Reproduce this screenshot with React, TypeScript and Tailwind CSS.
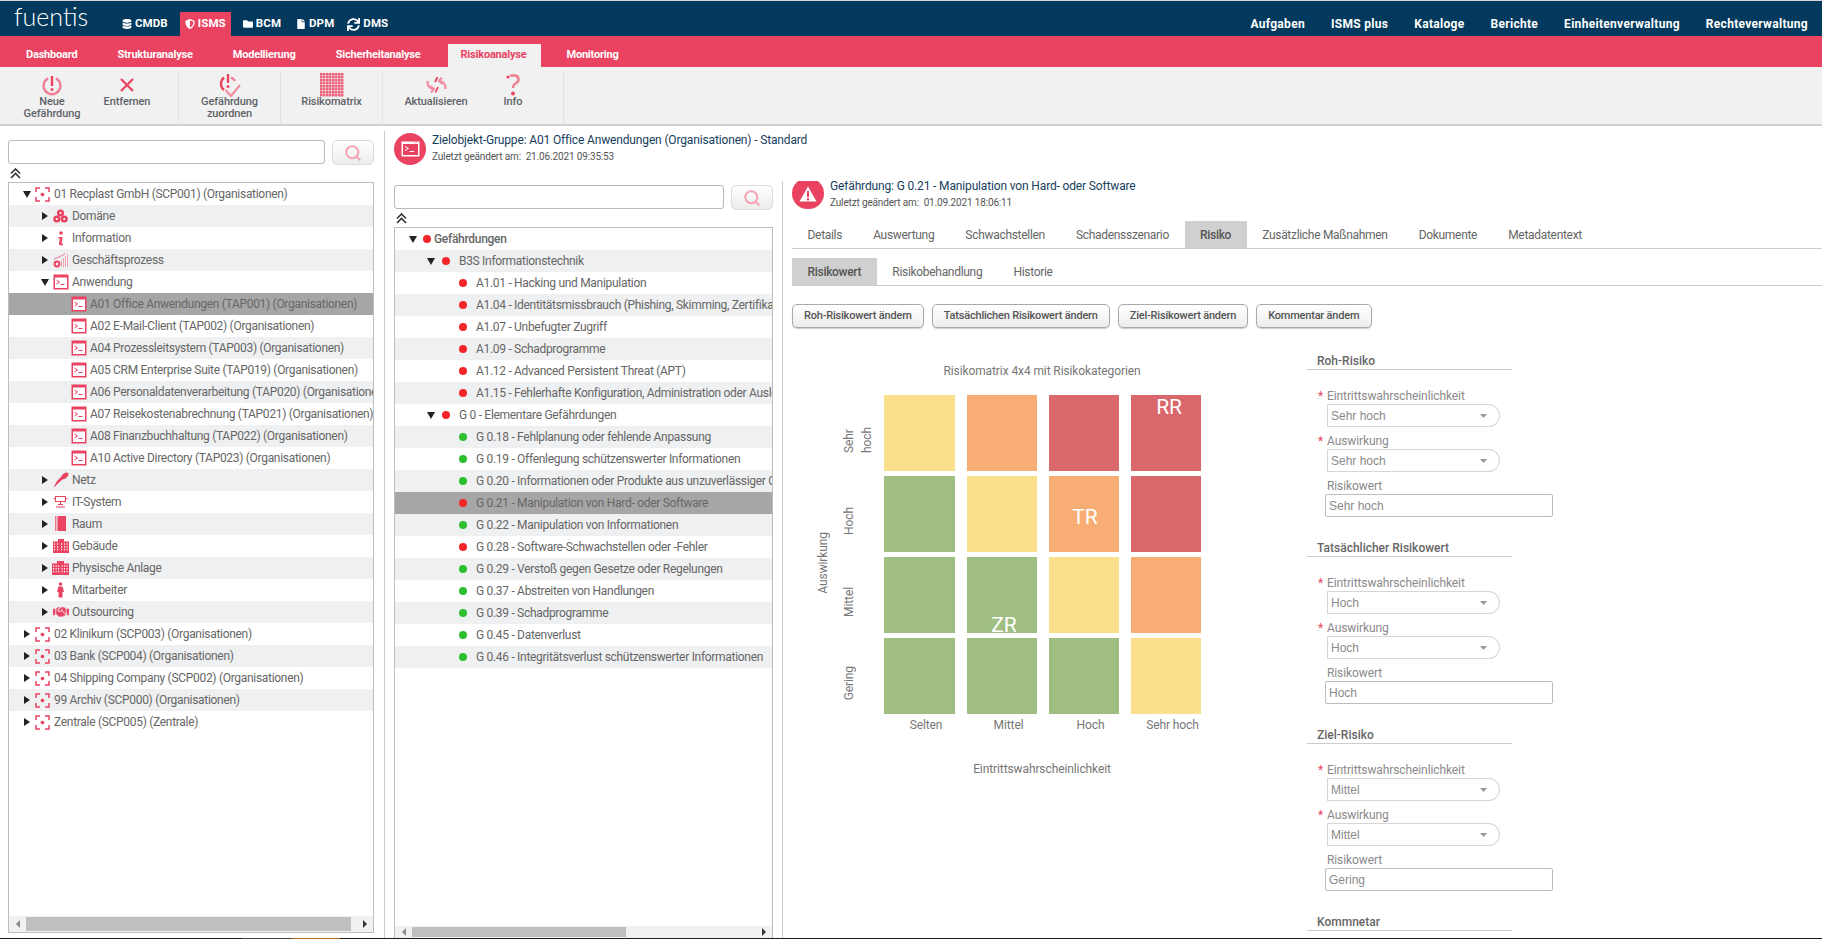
import { Search } from "lucide-react";
import { FaDatabase, FaFile, FaFolder, FaHandshake, FaShieldAlt, FaSync } from "react-icons/fa";
import type { ReactNode } from "react";

const PINK = "#ea4361";

function TerminalIcon({ size = 16 }: { size?: number }) {
  return (
    <svg width={size} height={size} viewBox="0 0 16 16">
      <rect x="0.5" y="0.5" width="15" height="15" fill={PINK} />
      <rect x="2" y="3.5" width="12" height="10.5" fill="#fff" />
      <path d="M3.5 6 L6.5 8 L3.5 10" fill="none" stroke={PINK} strokeWidth="1" />
      <path d="M7.5 10.5 H11.5" stroke={PINK} strokeWidth="1" />
    </svg>
  );
}

function HeaderTerminal() {
  return (
    <svg width="19" height="16" viewBox="0 0 19 16">
      <rect x="0.5" y="0.5" width="18" height="15" fill="#fff" />
      <rect x="2" y="3" width="15" height="11" fill={PINK} />
      <path d="M4 5.5 L7.5 7.5 L4 9.5" fill="none" stroke="#fff" strokeWidth="1" />
      <path d="M8.5 10.5 H13" stroke="#fff" strokeWidth="1" />
      <path d="M13.5 1.7 H14.5 M15.5 1.7 H16.5" stroke={PINK} strokeWidth="0.8" />
    </svg>
  );
}

function TargetIcon() {
  return (
    <svg width="15" height="15" viewBox="0 0 15 15" fill="none" stroke={PINK} strokeWidth="1.5">
      <path d="M1 5 V1 H5 M10 1 H14 V5 M14 10 V14 H10 M5 14 H1 V10" />
      <circle cx="7.5" cy="7.5" r="1.8" fill={PINK} stroke="none" />
    </svg>
  );
}

function DomainIcon() {
  return (
    <svg width="15" height="14" viewBox="0 0 15 14" fill={PINK}>
      <circle cx="7.5" cy="4" r="3.6" />
      <circle cx="3.8" cy="10" r="3.6" />
      <circle cx="11.2" cy="10" r="3.6" />
      <circle cx="7.5" cy="4" r="1.1" fill="#fff" />
      <circle cx="3.8" cy="10" r="1.1" fill="#fff" />
      <circle cx="11.2" cy="10" r="1.1" fill="#fff" />
    </svg>
  );
}

function InfoIcon() {
  return (
    <svg width="15" height="15" viewBox="0 0 15 15" fill={PINK}>
      <circle cx="8" cy="2" r="1.8" />
      <path d="M5.5 6 H9.5 L8.6 12 Q8.6 13 10 12.5 L10 14 Q6.2 15.4 6 12.6 L6.8 7.4 L5.5 7.4 Z" />
    </svg>
  );
}

function ProcessIcon() {
  return (
    <svg width="15" height="15" viewBox="0 0 15 15" fill="none" stroke={PINK}>
      <circle cx="4" cy="11" r="2.4" strokeWidth="2" />
      <path d="M1 6 L6 4 L9 2.5 L12 0.8" strokeWidth="0.7" />
      <path d="M8.5 14 V7 M10.5 14 V5 M12.5 14 V3 M14.5 14 V1" stroke="#f4a8b5" strokeWidth="1" />
    </svg>
  );
}

function PlugIcon() {
  return (
    <svg width="16" height="16" viewBox="0 0 16 16" fill={PINK}>
      <path d="M0.5 15.5 L4 9 L8 5 L10 2 L13 0.5 L15.5 1 L15 4 L12.5 6.5 L9.5 7.5 L6 10.5 L2 14.5 Z" />
    </svg>
  );
}

function NetworkIcon() {
  return (
    <svg width="15" height="12" viewBox="0 0 15 12" fill="none" stroke={PINK}>
      <rect x="2.5" y="0.5" width="10" height="5" />
      <path d="M0.5 2.5 H2.5 M12.5 2.5 H14.5 M7.5 5.5 V9 M3 11 H12 M5 8.5 H10" />
    </svg>
  );
}

function DoorIcon() {
  return (
    <svg width="11" height="16" viewBox="0 0 11 16" fill={PINK}>
      <rect x="0.3" y="0" width="1" height="15" />
      <rect x="2.5" y="0" width="8.5" height="15" />
    </svg>
  );
}

function BuildingIcon({ wide = false }: { wide?: boolean }) {
  const w = wide ? 17 : 16;
  const cols = wide ? [1.5, 4, 6.5, 10, 12.5, 15] : [1.5, 4.5, 8.5, 11.5, 14];
  return (
    <svg width={w} height="14" viewBox={`0 0 ${w} 14`}>
      <rect x="0" y="2.5" width={w} height="11.5" fill={PINK} />
      <rect x="5" y="0" width={wide ? 7 : 6} height="3" fill={PINK} />
      {cols.map((x) =>
        [4.2, 7, 9.8].map((y) => <rect key={`${x}-${y}`} x={x - 0.4} y={y} width="1" height="1.6" fill="#fff" />),
      )}
    </svg>
  );
}

function PersonIcon() {
  return (
    <svg width="9" height="16" viewBox="0 0 9 16" fill={PINK}>
      <circle cx="4.5" cy="2" r="1.8" />
      <path d="M2.5 4.5 H6.5 L8 10 H6.5 L6.5 15.5 H2.5 L2.5 10 H1 Z" />
    </svg>
  );
}

type TreeRow = {
  text: string;
  level: number;
  arrow?: "open" | "closed";
  icon?: ReactNode;
  dot?: "red" | "green";
  bold?: boolean;
  selected?: boolean;
};

const a = (text: string, selected = false): TreeRow => ({ text, level: 2, icon: <TerminalIcon />, selected });
const root = (text: string, arrow: "open" | "closed" = "closed"): TreeRow => ({ text, level: 0, arrow, icon: <TargetIcon /> });
const cat = (text: string, icon: ReactNode, arrow: "open" | "closed" = "closed"): TreeRow => ({ text, level: 1, arrow, icon });

const leftTree: TreeRow[] = [
  root("01 Recplast GmbH (SCP001) (Organisationen)", "open"),
  cat("Domäne", <DomainIcon />),
  cat("Information", <InfoIcon />),
  cat("Geschäftsprozess", <ProcessIcon />),
  cat("Anwendung", <TerminalIcon />, "open"),
  a("A01 Office Anwendungen (TAP001) (Organisationen)", true),
  a("A02 E-Mail-Client (TAP002) (Organisationen)"),
  a("A04 Prozessleitsystem (TAP003) (Organisationen)"),
  a("A05 CRM Enterprise Suite (TAP019) (Organisationen)"),
  a("A06 Personaldatenverarbeitung (TAP020) (Organisationen)"),
  a("A07 Reisekostenabrechnung (TAP021) (Organisationen)"),
  a("A08 Finanzbuchhaltung (TAP022) (Organisationen)"),
  a("A10 Active Directory (TAP023) (Organisationen)"),
  cat("Netz", <PlugIcon />),
  cat("IT-System", <NetworkIcon />),
  cat("Raum", <DoorIcon />),
  cat("Gebäude", <BuildingIcon />),
  cat("Physische Anlage", <BuildingIcon wide />),
  cat("Mitarbeiter", <PersonIcon />),
  cat("Outsourcing", <FaHandshake size={16} color={PINK} />),
  root("02 Klinikum (SCP003) (Organisationen)"),
  root("03 Bank (SCP004) (Organisationen)"),
  root("04 Shipping Company (SCP002) (Organisationen)"),
  root("99 Archiv (SCP000) (Organisationen)"),
  root("Zentrale (SCP005) (Zentrale)"),
];

const threat = (text: string, dot: "red" | "green" = "red", selected = false): TreeRow => ({ text, level: 2, dot, selected });

const midTree: TreeRow[] = [
  { text: "Gefährdungen", level: 0, arrow: "open", dot: "red", bold: true },
  { text: "B3S Informationstechnik", level: 1, arrow: "open", dot: "red" },
  threat("A1.01 - Hacking und Manipulation"),
  threat("A1.04 - Identitätsmissbrauch (Phishing, Skimming, Zertifikatsfälschung)"),
  threat("A1.07 - Unbefugter Zugriff"),
  threat("A1.09 - Schadprogramme"),
  threat("A1.12 - Advanced Persistent Threat (APT)"),
  threat("A1.15 - Fehlerhafte Konfiguration, Administration oder Auslegung"),
  { text: "G 0 - Elementare Gefährdungen", level: 1, arrow: "open", dot: "red" },
  threat("G 0.18 - Fehlplanung oder fehlende Anpassung", "green"),
  threat("G 0.19 - Offenlegung schützenswerter Informationen", "green"),
  threat("G 0.20 - Informationen oder Produkte aus unzuverlässiger Quelle", "green"),
  threat("G 0.21 - Manipulation von Hard- oder Software", "red", true),
  threat("G 0.22 - Manipulation von Informationen", "green"),
  threat("G 0.28 - Software-Schwachstellen oder -Fehler", "red"),
  threat("G 0.29 - Verstoß gegen Gesetze oder Regelungen", "green"),
  threat("G 0.37 - Abstreiten von Handlungen", "green"),
  threat("G 0.39 - Schadprogramme", "green"),
  threat("G 0.45 - Datenverlust", "green"),
  threat("G 0.46 - Integritätsverlust schützenswerter Informationen", "green"),
];

function Arrow({ dir }: { dir: "open" | "closed" }) {
  return dir === "open" ? (
    <svg width="8" height="8" viewBox="0 0 8 8" className="shrink-0">
      <path d="M0 1 H8 L4 8 Z" fill="#222" />
    </svg>
  ) : (
    <svg width="8" height="8" viewBox="0 0 8 8" className="shrink-0">
      <path d="M1 0 L7 4 L1 8 Z" fill="#222" />
    </svg>
  );
}

function IconTreeRow({ row, gray }: { row: TreeRow; gray: boolean }) {
  const bg = row.selected ? "bg-[#a6a6a6]" : gray ? "bg-[#eff0f1]" : "bg-white";
  const pad = row.level === 0 ? "pl-[14px]" : row.level === 1 ? "pl-[32px]" : "pl-[58px]";
  return (
    <div className={`flex h-[22px] shrink-0 items-center whitespace-nowrap ${bg} ${pad}`}>
      {row.arrow && <Arrow dir={row.arrow} />}
      <span className="ml-[3px] flex w-[17px] shrink-0 items-center justify-center">{row.icon}</span>
      <span className="ml-[3px] text-[12px] tracking-[-0.3px] text-[#666]">{row.text}</span>
    </div>
  );
}

function DotTreeRow({ row, gray }: { row: TreeRow; gray: boolean }) {
  const bg = row.selected ? "bg-[#a6a6a6]" : gray ? "bg-[#eff0f1]" : "bg-white";
  const pad = row.level === 0 ? "pl-[14px]" : row.level === 1 ? "pl-[32px]" : "pl-[64px]";
  const gap = row.level === 0 ? "ml-[6px]" : row.level === 1 ? "ml-[7px]" : "";
  const textGap = row.level === 0 ? "ml-[3px]" : "ml-[9px]";
  return (
    <div className={`flex h-[22px] shrink-0 items-center whitespace-nowrap ${bg} ${pad}`}>
      {row.arrow && <Arrow dir={row.arrow} />}
      <span className={`h-2 w-2 shrink-0 rounded-full ${gap} ${row.dot === "red" ? "bg-[#f5262b]" : "bg-[#2dbf2d]"}`} />
      <span className={`${textGap} text-[12px] tracking-[-0.3px] ${row.bold ? "font-medium" : ""} text-[#666]`}>{row.text}</span>
    </div>
  );
}

function ScrollBar({ thumbWidth, height }: { thumbWidth: string; height: string }) {
  return (
    <div className={`flex shrink-0 items-center bg-[#f1f1f1] py-px ${height}`}>
      <span className="flex w-[17px] shrink-0 justify-center">
        <svg width="4" height="8" viewBox="0 0 4 8">
          <path d="M4 0 V8 L0 4 Z" fill="#8a8a8a" />
        </svg>
      </span>
      <div className={`h-full bg-[#bfbfbf] ${thumbWidth}`} />
      <span className="ml-auto flex w-[17px] shrink-0 justify-center">
        <svg width="4" height="8" viewBox="0 0 4 8">
          <path d="M0 0 V8 L4 4 Z" fill="#333" />
        </svg>
      </span>
    </div>
  );
}

function SearchBar() {
  return (
    <div className="flex h-6 shrink-0 gap-[7px]">
      <div className="flex-1 rounded-[3px] border border-[#b9b9b9] bg-white" />
      <button className="flex h-[25px] w-[42px] items-center justify-center rounded-[5px] border border-[#dcdcdc] bg-gradient-to-b from-white to-[#ececec]">
        <Search size={18} color="#f4a3b2" strokeWidth={2.6} />
      </button>
    </div>
  );
}

function Collapse() {
  return (
    <div className="flex h-[18px] shrink-0 items-center pl-[2px]">
      <svg width="11" height="11" viewBox="0 0 11 11" fill="none" stroke="#333" strokeWidth="1.6">
        <path d="M1 5.5 L5.5 1 L10 5.5 M1 10 L5.5 5.5 L10 10" />
      </svg>
    </div>
  );
}

const mainMenu = [
  { label: "CMDB", icon: <FaDatabase size={10} />, cls: "ml-[37px]" },
  { label: "ISMS", icon: <FaShieldAlt size={10} />, cls: "ml-[12px] bg-[#ea4361] px-[5px]" },
  { label: "BCM", icon: <FaFolder size={10} />, cls: "ml-[12px]" },
  { label: "DPM", icon: <FaFile size={10} />, cls: "ml-[15px]" },
  { label: "DMS", icon: <FaSync size={13} />, cls: "ml-[13px]" },
];

function TopBar() {
  return (
    <div className="flex h-[35px] shrink-0 bg-[#03395c] text-white">
      <div className="ml-[14px] w-[71px] pt-[1px] text-[25px] leading-[28px] font-light [font-family:Lato,sans-serif]">fuentis</div>
      {mainMenu.map((m) => (
        <div key={m.label} className={`mt-[11px] flex h-6 items-center gap-[3px] text-[11.5px] font-bold tracking-[0.1px] ${m.cls}`}>
          {m.icon}
          {m.label}
        </div>
      ))}
      <div className="mt-[11px] mr-[14px] ml-auto flex h-6 items-center gap-[26px] text-[12px] font-bold tracking-[0.3px]">
        <span>Aufgaben</span>
        <span>ISMS plus</span>
        <span>Kataloge</span>
        <span>Berichte</span>
        <span>Einheitenverwaltung</span>
        <span>Rechteverwaltung</span>
      </div>
    </div>
  );
}

function PinkBar() {
  const items = ["Dashboard", "Strukturanalyse", "Modellierung", "Sicherheitanalyse"];
  return (
    <div className="flex h-[31px] shrink-0 items-end bg-[#ea4361] pl-[6px] text-[11px] font-bold tracking-[-0.2px] text-white">
      {items.map((item) => (
        <div key={item} className="flex h-[23px] items-center px-[20px]">
          {item}
        </div>
      ))}
      <div className="ml-[8px] flex h-[23px] items-center bg-[#f1f1f1] pr-[15px] pl-[12px] text-[#ea4361]">Risikoanalyse</div>
      <div className="ml-[5px] flex h-[23px] items-center px-[20px]">Monitoring</div>
    </div>
  );
}

function PowerWarnIcon({ check = false }: { check?: boolean }) {
  return (
    <svg width={check ? 23 : 20} height={check ? 24 : 21} viewBox={check ? "0 0 23 24" : "0 0 20 21"} fill="none" stroke={PINK} className="shrink-0">
      {check ? (
        <>
          <path d="M6 4.5 A8 8 0 0 0 6 17" strokeWidth="2.4" />
          <path d="M13 4.5 A8 8 0 0 1 17 8" strokeWidth="2.4" stroke="#ef7f92" />
          <path d="M10 1 V10" strokeWidth="2.4" />
          <circle cx="10" cy="13.5" r="1.5" fill={PINK} stroke="none" />
          <path d="M7.5 17 L13 23 L22 12" strokeWidth="2.2" stroke="#ef8fa0" />
        </>
      ) : (
        <>
          <path d="M6 3.4 A8.4 8.4 0 1 0 14 3.4" strokeWidth="2.4" stroke="#ef7f92" />
          <path d="M10 1 V11" strokeWidth="2.4" />
          <circle cx="10" cy="14.5" r="1.5" fill={PINK} stroke="none" />
        </>
      )}
    </svg>
  );
}

function MatrixIcon() {
  const cells: ReactNode[] = [];
  for (let r = 0; r < 4; r++) {
    for (let c = 0; c < 4; c++) {
      cells.push(<rect key={`${r}-${c}`} x={c * 6} y={r * 6} width="5.4" height="5.4" fill={PINK} opacity="0.85" />);
      cells.push(<path key={`l${r}-${c}`} d={`M${c * 6 + 2.7} ${r * 6} v5.4 M${c * 6} ${r * 6 + 2.7} h5.4`} stroke="#f7c3cc" strokeWidth="0.7" />);
    }
  }
  return (
    <svg width="24" height="24" viewBox="0 0 24 24" className="shrink-0">
      {cells}
    </svg>
  );
}

function RefreshIcon() {
  return (
    <svg width="21" height="18" viewBox="0 0 21 18" fill="none" className="shrink-0">
      <path d="M1.5 5 Q1.5 12 7 13 M4.5 10 L8 13 L5 16.5" stroke="#f08da0" strokeWidth="2.2" />
      <path d="M19.5 13 Q19.5 6 14 5 M16.5 8 L13 5 L16 1.5" stroke="#f08da0" strokeWidth="2.2" />
      <path d="M11.5 1 L9 6 M12 11 L9.5 16.5" stroke={PINK} strokeWidth="1.8" />
    </svg>
  );
}

function QuestionIcon() {
  return (
    <svg width="14" height="22" viewBox="0 0 14 22" fill="none" stroke="#ef7f92" strokeWidth="2.4" className="shrink-0">
      <circle cx="2" cy="3" r="1.6" fill={PINK} stroke="none" />
      <path d="M4 1.5 H9 Q12.5 2 12.5 5.5 Q12.5 8 9.5 9.5 Q7 11 7 14" />
      <circle cx="7" cy="19.5" r="2" fill={PINK} stroke="none" />
    </svg>
  );
}

function ToolItem({ icon, label, cls }: { icon: ReactNode; label: ReactNode; cls: string }) {
  return (
    <div className={`flex flex-col items-center ${cls}`}>
      <div className="flex h-[22px] shrink-0 items-center justify-center">{icon}</div>
      <div className="text-center text-[11px] leading-[12px] font-medium tracking-[-0.1px] whitespace-nowrap text-[#5f6368]">{label}</div>
    </div>
  );
}

function Toolbar() {
  return (
    <div className="flex h-[59px] shrink-0 border-b-2 border-[#cfcfcf] bg-[#f1f1f1] pt-[3px]">
      <div className="flex h-[55px] w-[179px] border-r border-[#e3e3e3] pt-[4px]">
        <ToolItem cls="w-[104px]" icon={<PowerWarnIcon />} label={<>Neue<br />Gefährdung</>} />
        <ToolItem cls="w-[46px]" icon={<svg width="16" height="16" viewBox="0 0 16 16" stroke={PINK} strokeWidth="2.2"><path d="M2 2 L14 14 M14 2 L2 14" /></svg>} label="Entfernen" />
      </div>
      <div className="flex h-[55px] w-[102px] justify-center border-r border-[#e3e3e3] pt-[4px]">
        <ToolItem cls="" icon={<PowerWarnIcon check />} label={<>Gefährdung<br />zuordnen</>} />
      </div>
      <div className="flex h-[55px] w-[102px] justify-center border-r border-[#e3e3e3] pt-[4px]">
        <ToolItem cls="" icon={<MatrixIcon />} label="Risikomatrix" />
      </div>
      <div className="flex h-[55px] w-[181px] border-r border-[#e3e3e3] pt-[4px]">
        <ToolItem cls="w-[106px]" icon={<RefreshIcon />} label="Aktualisieren" />
        <ToolItem cls="w-[46px] ml-[1px]" icon={<QuestionIcon />} label="Info" />
      </div>
    </div>
  );
}

function RowTabs({ items, active, cls }: { items: string[]; active: string; cls: string }) {
  return (
    <div className={`flex h-[28px] shrink-0 border-b border-[#ccc] whitespace-nowrap ${cls}`}>
      {items.map((t) => (
        <div key={t} className={`flex h-[27px] items-center px-[15.5px] text-[12px] tracking-[-0.3px] ${t === active ? "bg-[#d0d0d0] font-medium text-[#555]" : "text-[#666]"}`}>
          {t}
        </div>
      ))}
    </div>
  );
}

const actionButtons = ["Roh-Risikowert ändern", "Tatsächlichen Risikowert ändern", "Ziel-Risikowert ändern", "Kommentar ändern"];

const matrixCells = [
  ["y", "o", "r", "r"],
  ["g", "y", "o", "r"],
  ["g", "g", "y", "o"],
  ["g", "g", "g", "y"],
];

const cellBg: Record<string, string> = {
  y: "bg-[#fbe08b]",
  o: "bg-[#f8ad75]",
  r: "bg-[#d8686b]",
  g: "bg-[#a1be82]",
};

function cellLabel(r: number, c: number) {
  if (r === 0 && c === 3) return <span className="ml-[6px] text-[21px] leading-[24px] text-white">RR</span>;
  if (r === 1 && c === 2) return <span className="mt-[29px] ml-[2px] text-[21px] leading-[24px] text-white">TR</span>;
  if (r === 2 && c === 1) return <span className="mt-[56px] ml-[4px] text-[21px] leading-[24px] text-white">ZR</span>;
  return null;
}

function RiskMatrix() {
  return (
    <div className="w-[515px] shrink-0 text-[12px] tracking-[-0.1px] text-[#777]">
      <div className="mt-[35px] h-4 w-[500px] text-center leading-4">Risikomatrix 4x4 mit Risikokategorien</div>
      <div className="mt-[16px] flex h-[319px]">
        <div className="flex w-[48px] items-center justify-end pt-[16px] pr-[9px]">
          <span className="rotate-180 leading-4 [writing-mode:vertical-rl]">Auswirkung</span>
        </div>
        <div className="grid w-[44px] grid-rows-[76px_76px_76px_76px] gap-y-[5px]">
          {[["Sehr", "hoch"], ["Hoch"], ["Mittel"], ["Gering"]].map((lines) => (
            <div key={lines[0]} className="flex items-center pt-[14px]">
              <span className="rotate-180 whitespace-pre-line leading-[18px] [writing-mode:vertical-rl]">{lines.join("\n")}</span>
            </div>
          ))}
        </div>
        <div className="grid grid-cols-[71px_70px_70px_70px] grid-rows-[76px_76px_76px_76px] gap-x-3 gap-y-[5px]">
          {matrixCells.flatMap((row, r) =>
            row.map((k, c) => (
              <div key={`${r}-${c}`} className={`flex justify-center ${cellBg[k]}`}>
                {cellLabel(r, c)}
              </div>
            )),
          )}
        </div>
      </div>
      <div className="mt-[3px] ml-[92px] grid h-4 grid-cols-[71px_70px_70px_70px] gap-x-3 text-center leading-4 whitespace-nowrap">
        {["Selten", "Mittel", "Hoch", "Sehr hoch"].map((t) => (
          <span key={t} className="pl-[13px]">{t}</span>
        ))}
      </div>
      <div className="mt-[28px] h-4 w-[500px] text-center leading-4">Eintrittswahrscheinlichkeit</div>
    </div>
  );
}

function SelectField({ label, value }: { label: string; value: string }) {
  return (
    <div>
      <div className="flex h-4 items-center text-[12px] tracking-[-0.1px] text-[#8a8a8a]">
        <span className="w-[20px] pl-[11px] text-[12px] text-[#ea4361]">*</span>
        {label}
      </div>
      <div className="ml-[20px] flex h-[23px] w-[173px] items-center rounded-l-[4px] rounded-r-full border border-[#d6d6d6] pr-[12px] pl-[3px] text-[12px] text-[#8a8a8a] [font-family:'Liberation_Sans',sans-serif]">
        {value}
        <svg width="7" height="4" viewBox="0 0 7 4" className="ml-auto">
          <path d="M0 0 H7 L3.5 4 Z" fill="#999" />
        </svg>
      </div>
    </div>
  );
}

function RiskSection({ title, chance, impact, value }: { title: string; chance: string; impact: string; value: string }) {
  return (
    <div className="mb-[23px] w-[246px]">
      <div className="h-[17px] w-[205px] border-b border-[#ccc] pl-[10px] text-[12px] leading-4 font-medium text-[#666]">{title}</div>
      <div className="mt-[18px] flex flex-col gap-[6px]">
        <SelectField label="Eintrittswahrscheinlichkeit" value={chance} />
        <SelectField label="Auswirkung" value={impact} />
        <div>
          <div className="h-4 pl-[20px] text-[12px] leading-4 tracking-[-0.1px] text-[#8a8a8a]">Risikowert</div>
          <div className="ml-[18px] flex h-[23px] w-[228px] items-center rounded-[2px] border border-[#bdbdbd] pl-[3px] text-[12px] text-[#8a8a8a] [font-family:'Liberation_Sans',sans-serif]">
            {value}
          </div>
        </div>
      </div>
    </div>
  );
}

function RiskForm() {
  return (
    <div className="pt-[25px]">
      <RiskSection title="Roh-Risiko" chance="Sehr hoch" impact="Sehr hoch" value="Sehr hoch" />
      <RiskSection title="Tatsächlicher Risikowert" chance="Hoch" impact="Hoch" value="Hoch" />
      <RiskSection title="Ziel-Risiko" chance="Mittel" impact="Mittel" value="Gering" />
      <div className="h-[17px] w-[205px] border-b border-[#ccc] pl-[10px] text-[12px] leading-4 font-medium text-[#666]">Kommnetar</div>
    </div>
  );
}

export default function App() {
  return (
    <div className="flex h-[939px] w-full flex-col overflow-hidden bg-white [font-family:Roboto,sans-serif]">
      <div className="h-px shrink-0 bg-[#d5d5d5]" />
      <TopBar />
      <PinkBar />
      <Toolbar />

      <div className="flex min-h-0 flex-1">
        {/* Organisationsbaum */}
        <div className="flex w-[384px] shrink-0 flex-col pt-[14px] pr-[10px] pb-[5px] pl-2">
          <SearchBar />
          <Collapse />
          <div className="flex min-h-0 flex-1 flex-col border border-[#bdbdbd]">
            <div className="flex flex-1 flex-col overflow-hidden">
              {leftTree.map((row, i) => (
                <IconTreeRow key={row.text} row={row} gray={i % 2 === 1} />
              ))}
            </div>
            <ScrollBar thumbWidth="w-[325px]" height="h-[16px]" />
          </div>
        </div>

        <div className="mt-[5px] flex min-w-0 flex-1 flex-col border-l border-[#ccc]">
          <div className="flex shrink-0 gap-[6px] pt-[2px] pl-[9px]">
            <div className="flex h-[32px] w-[32px] items-center justify-center rounded-full bg-[#ea4361]">
              <HeaderTerminal />
            </div>
            <div>
              <div className="mt-[-1px] text-[12px] leading-[16px] tracking-[-0.15px] text-[#17405e]">Zielobjekt-Gruppe: A01 Office Anwendungen (Organisationen) - Standard</div>
              <div className="mt-[2px] text-[10px] leading-[14px] tracking-[-0.15px] text-[#555]">Zuletzt geändert am:&nbsp; 21.06.2021 09:35:53</div>
            </div>
          </div>

          <div className="mt-[16px] flex min-h-0 flex-1">
            {/* Gefährdungsbaum */}
            <div className="flex w-[397px] shrink-0 flex-col pt-[4px] pr-[9px] pl-[9px]">
              <SearchBar />
              <Collapse />
              <div className="flex min-h-0 flex-1 flex-col border-x border-t border-[#bdbdbd]">
                <div className="flex flex-1 flex-col overflow-hidden">
                  {midTree.map((row, i) => (
                    <DotTreeRow key={row.text} row={row} gray={i % 2 === 1} />
                  ))}
                </div>
                <ScrollBar thumbWidth="w-[214px]" height="h-[12px]" />
              </div>
            </div>

            {/* Detailbereich */}
            <div className="min-w-0 flex-1 overflow-hidden border-l border-[#ccc] pl-[9px]">
              <div className="-mt-[3px] flex h-[31px] gap-[6px]">
                <div className="flex h-[31px] w-[32px] items-center justify-center rounded-full bg-[#ea4361]">
                  <svg width="18" height="16" viewBox="0 0 18 16">
                    <path d="M9 0.5 L17.5 15.5 H0.5 Z" fill="#fff" />
                    <path d="M9 5 V11" stroke="#ea4361" strokeWidth="2" />
                    <circle cx="9" cy="13.2" r="1.2" fill="#ea4361" />
                  </svg>
                </div>
                <div>
                  <div className="text-[12px] leading-[16px] tracking-[-0.15px] text-[#17405e]">Gefährdung: G 0.21 - Manipulation von Hard- oder Software</div>
                  <div className="mt-[2px] text-[10px] leading-[14px] tracking-[-0.15px] text-[#555]">Zuletzt geändert am:&nbsp; 01.09.2021 18:06:11</div>
                </div>
              </div>

              <RowTabs cls="mt-[12px]" active="Risiko" items={["Details", "Auswertung", "Schwachstellen", "Schadensszenario", "Risiko", "Zusätzliche Maßnahmen", "Dokumente", "Metadatentext"]} />
              <RowTabs cls="mt-[9px]" active="Risikowert" items={["Risikowert", "Risikobehandlung", "Historie"]} />

              <div className="mt-[18px] flex gap-2">
                {actionButtons.map((b) => (
                  <button key={b} className="h-6 rounded-[5px] border border-[#a9a9a9] bg-gradient-to-b from-white to-[#ededed] px-[11px] text-[11px] font-medium tracking-[-0.2px] whitespace-nowrap text-[#555] shadow-[0_1px_1px_rgba(0,0,0,0.2)]">
                    {b}
                  </button>
                ))}
              </div>

              <div className="flex">
                <RiskMatrix />
                <RiskForm />
              </div>
            </div>
          </div>
        </div>
      </div>

      <div className="flex h-px shrink-0 bg-[#1c1c1c]">
        <div className="ml-[242px] w-[50px] bg-[#444]" />
        <div className="w-[48px] bg-[#b5651d]" />
      </div>
    </div>
  );
}
